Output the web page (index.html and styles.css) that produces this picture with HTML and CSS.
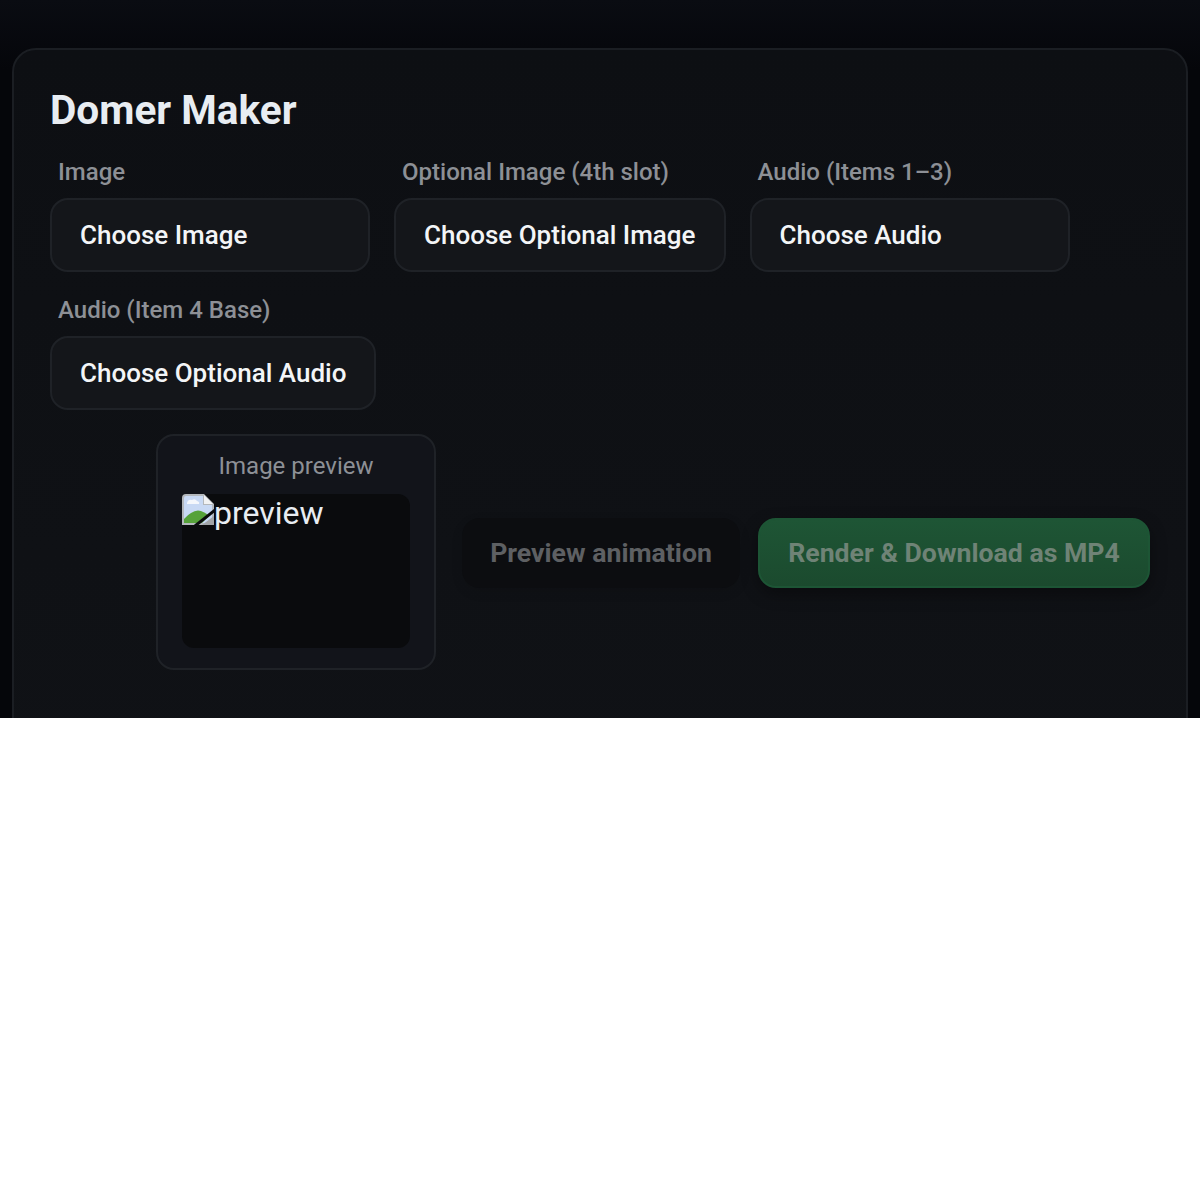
FILE: index.html
```html
<!DOCTYPE html>
<html lang="en">
  <head>
    <meta charset="UTF-8" />
    <meta name="viewport" content="width=device-width, initial-scale=1.0" />
    <title>Domer Maker</title>
    <link rel="stylesheet" href="styles.css">
  </head>
  <body>
    <div class="page">
      <main class="card">
        <h1>Domer Maker</h1>

        <div class="fields">
          <div class="field">
            <label>Image</label>
            <button class="file-btn">Choose Image</button>
          </div>
          <div class="field">
            <label>Optional Image (4th slot)</label>
            <button class="file-btn">Choose Optional Image</button>
          </div>
          <div class="field">
            <label>Audio (Items 1–3)</label>
            <button class="file-btn">Choose Audio</button>
          </div>
          <div class="field">
            <label>Audio (Item 4 Base)</label>
            <button class="file-btn">Choose Optional Audio</button>
          </div>
        </div>

        <div class="actions">
          <div class="preview-box">
            <div class="preview-label">Image preview</div>
            <div class="preview-img">
              <!-- Broken image icon -->
              <svg class="broken-icon" width="32" height="32" viewBox="0 0 32 32">
                <path d="M4 0H22L32 10V31H0V4Q0 0 4 0Z" fill="#b4b8bc"/>
                <path d="M4 2H21V11H30V29H2V4Q2 2 4 2Z" fill="#c8d9f4"/>
                <path d="M5 9Q6 5 10 6Q13 4 15 7Q18 8 17 10H5Z" fill="#f4f7fc"/>
                <path d="M2 29V25Q9 17 16 16.5Q22 17 27 22L20 29Z" fill="#56a23a"/>
                <path d="M22 1L31 10H22Z" fill="#f1f2f3"/>
                <path d="M20 31H32V22Z" fill="#a2a5a8"/>
                <path d="M13 32L33 16" stroke="#0a0b0d" stroke-width="3"/>
              </svg>
              <span class="alt-text">preview</span>
            </div>
          </div>
          <button class="btn btn-plain" disabled>Preview animation</button>
          <button class="btn btn-green" disabled>Render &amp; Download as MP4</button>
        </div>
      </main>
    </div>
  </body>
</html>
```

FILE: styles.css
```css
/* Reset & Base Styles */
* {
  margin: 0;
  padding: 0;
  box-sizing: border-box;
  font-family: Roboto, "Liberation Sans", sans-serif;
}

html,
body {
  background-color: #fff;
}

/* Page is only 718px tall, white below */
.page {
  height: 718px;
  overflow: hidden;
  padding: 48px 12px 0;
  background-color: #05060a;
  background-image: linear-gradient(to bottom, #0a0c12, #05060a 70px);
}

/* Card */
.card {
  height: 760px;
  padding: 36px;
  background-color: #0f1115;
  background-image: linear-gradient(to bottom, #0d0f13, #101216);
  border: 2px solid #1b1e23;
  border-radius: 24px;
}

h1 {
  font-size: 40.6px;
  line-height: 48px;
  font-weight: 700;
  color: #e8edf2;
  margin-bottom: 23px;
}

/* File fields */
.fields {
  display: flex;
  flex-wrap: wrap;
  gap: 23px 24px;
  max-width: 1040px;
}

.field {
  display: flex;
  flex-direction: column;
}

.field label {
  font-size: 24px;
  line-height: 30px;
  font-weight: 500;
  color: #8d9096;
  padding: 0 8px;
  margin-bottom: 11px;
}

.file-btn {
  min-width: 320px;
  height: 74px;
  padding: 0 28px;
  text-align: left;
  font-size: 26px;
  font-weight: 500;
  color: #f3f5f7;
  background-color: #14161a;
  border: 2px solid #1f2227;
  border-radius: 18px;
}

/* Preview and action buttons */
.actions {
  display: flex;
  align-items: center;
  justify-content: flex-end;
  margin-top: 24px;
}

.preview-box {
  width: 280px;
  height: 236px;
  padding: 15px 24px 0;
  background-color: #12141a;
  border: 2px solid #1f2227;
  border-radius: 18px;
  margin-right: 26px;
}

.preview-label {
  font-size: 24px;
  line-height: 30px;
  text-align: center;
  color: #8d9096;
  margin-bottom: 13px;
}

.preview-img {
  height: 154px;
  background-color: #0a0b0d;
  border-radius: 12px;
  color: #e8edf2;
  font-size: 32px;
  line-height: 38px;
  display: flex;
  align-items: flex-start;
}

.broken-icon {
  flex-shrink: 0;
}

.btn {
  height: 70px;
  margin-top: 2px;
  font-size: 26.67px;
  font-weight: 700;
  border: none;
  border-radius: 18px;
}

.btn-plain {
  width: 278px;
  color: #5e6063;
  background-color: #0c0d10;
  box-shadow: 0 4px 12px rgba(0, 0, 0, 0.1);
  margin-right: 18px;
}

.btn-green {
  width: 392px;
  color: #6f8376;
  background-image: linear-gradient(to bottom, #1e5535, #1b4a2e);
  border: 2px solid #1d5535;
  box-shadow: 0 6px 16px rgba(0, 0, 0, 0.35);
}
```
